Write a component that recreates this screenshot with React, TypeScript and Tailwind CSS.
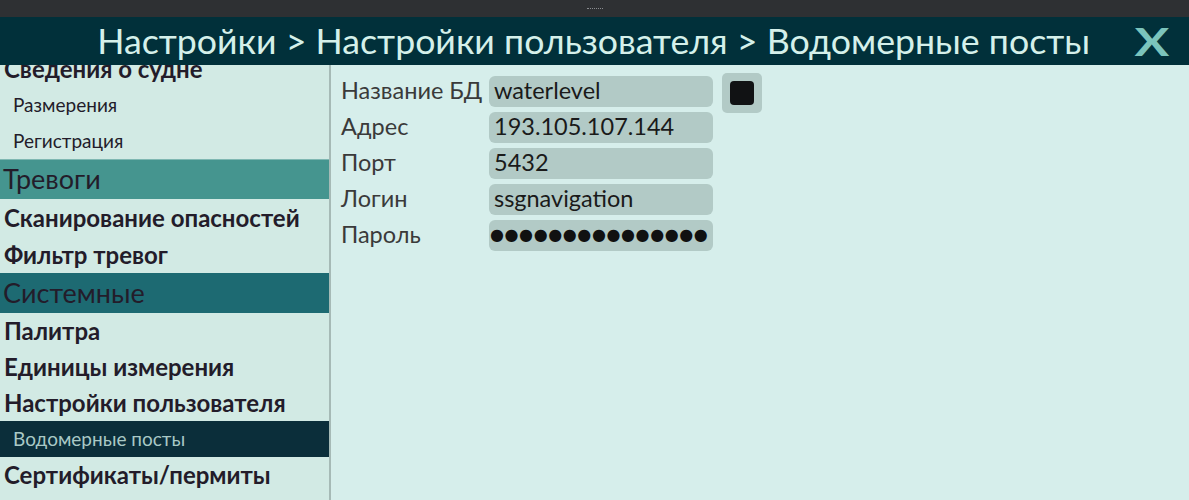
const font = { fontFamily: "Lato, 'Noto Sans', sans-serif" };

function SubItem({ label, active = false }: { label: string; active?: boolean }) {
  return (
    <div
      className={
        "h-[36px] flex items-center pl-[13px] text-[19px] " +
        (active ? "bg-[#0b2e3a] text-[#a9c9c6]" : "text-[#231c2a]")
      }
    >
      {label}
    </div>
  );
}

function Item({ label, h = "h-[36px]" }: { label: string; h?: string }) {
  return (
    <div className={h + " flex items-center pl-[4px] text-[24px] font-bold text-[#231c2a]"}>
      {label}
    </div>
  );
}

function Group({ label, color }: { label: string; color: string }) {
  return (
    <div className={"h-[40px] flex items-center pl-[3px] text-[27px] text-[#231c2a] " + color}>
      {label}
    </div>
  );
}

function Field({ label, value }: { label: string; value: string }) {
  return (
    <div className="flex items-center h-[36px]">
      <div className="w-[148px] text-[23.5px] text-[#3a3a3a]">{label}</div>
      <div className="w-[224px] h-[31px] rounded-[6px] bg-[#b2cac6] flex items-center pl-[5px] text-[23.5px] text-[#1a1a1a]">
        {value}
      </div>
    </div>
  );
}

export default function App() {
  return (
    <div className="w-[1189px] h-[500px] flex flex-col overflow-hidden" style={font}>
      <div className="h-[17px] bg-[#2e3033] flex items-center justify-center">
        <div className="w-[16px] border-t border-dotted border-[#8a8c90]" />
      </div>
      <div className="h-[48px] bg-[#01303a] flex items-center justify-end pr-[21px]">
        <div className="text-[35.7px] text-[#d5f0ea] leading-none">
          Настройки &gt; Настройки пользователя &gt; Водомерные посты
        </div>
        <div className="ml-[46px] w-[32px] flex justify-center text-[39px] font-bold leading-none text-[#7bc4bc] scale-x-[1.33]">
          X
        </div>
      </div>
      <div className="flex flex-1 min-h-0">
        <div className="w-[331px] bg-[#d2eae4] border-r-2 border-[#a6bab6] overflow-hidden">
          <div className="-mt-[14px]">
            <Item label="Сведения о судне" />
            <SubItem label="Размерения" />
            <SubItem label="Регистрация" />
            <Group label="Тревоги" color="bg-[#45958f] border-t border-[#7fb8b2]" />
            <Item label="Сканирование опасностей" h="h-[37px]" />
            <Item label="Фильтр тревог" h="h-[37px]" />
            <Group label="Системные" color="bg-[#1d6a72]" />
            <Item label="Палитра" />
            <Item label="Единицы измерения" />
            <Item label="Настройки пользователя" />
            <SubItem label="Водомерные посты" active />
            <Item label="Сертификаты/пермиты" />
          </div>
        </div>
        <div className="flex-1 bg-[#d6eeeb] pl-[10px] pt-[8px] flex items-start gap-[9px]">
          <div className="flex flex-col">
            <Field label="Название БД" value="waterlevel" />
            <Field label="Адрес" value="193.105.107.144" />
            <Field label="Порт" value="5432" />
            <Field label="Логин" value="ssgnavigation" />
            <div className="flex items-center h-[36px]">
              <div className="w-[148px] text-[23.5px] text-[#3a3a3a]">Пароль</div>
              <div
                className="w-[224px] h-[31px] rounded-[6px] bg-[#b2cac6] flex items-center pl-[1px] text-[16px] text-[#111] tracking-[0.6px]"
                style={{ fontFamily: "'DejaVu Sans', sans-serif" }}
              >
                ●●●●●●●●●●●●●●●
              </div>
            </div>
          </div>
          <div className="w-[40px] h-[40px] rounded-[5px] bg-[#b2cac6] flex items-center justify-center">
            <div className="w-[24px] h-[24px] rounded-[4px] bg-[#111214]" />
          </div>
        </div>
      </div>
    </div>
  );
}
